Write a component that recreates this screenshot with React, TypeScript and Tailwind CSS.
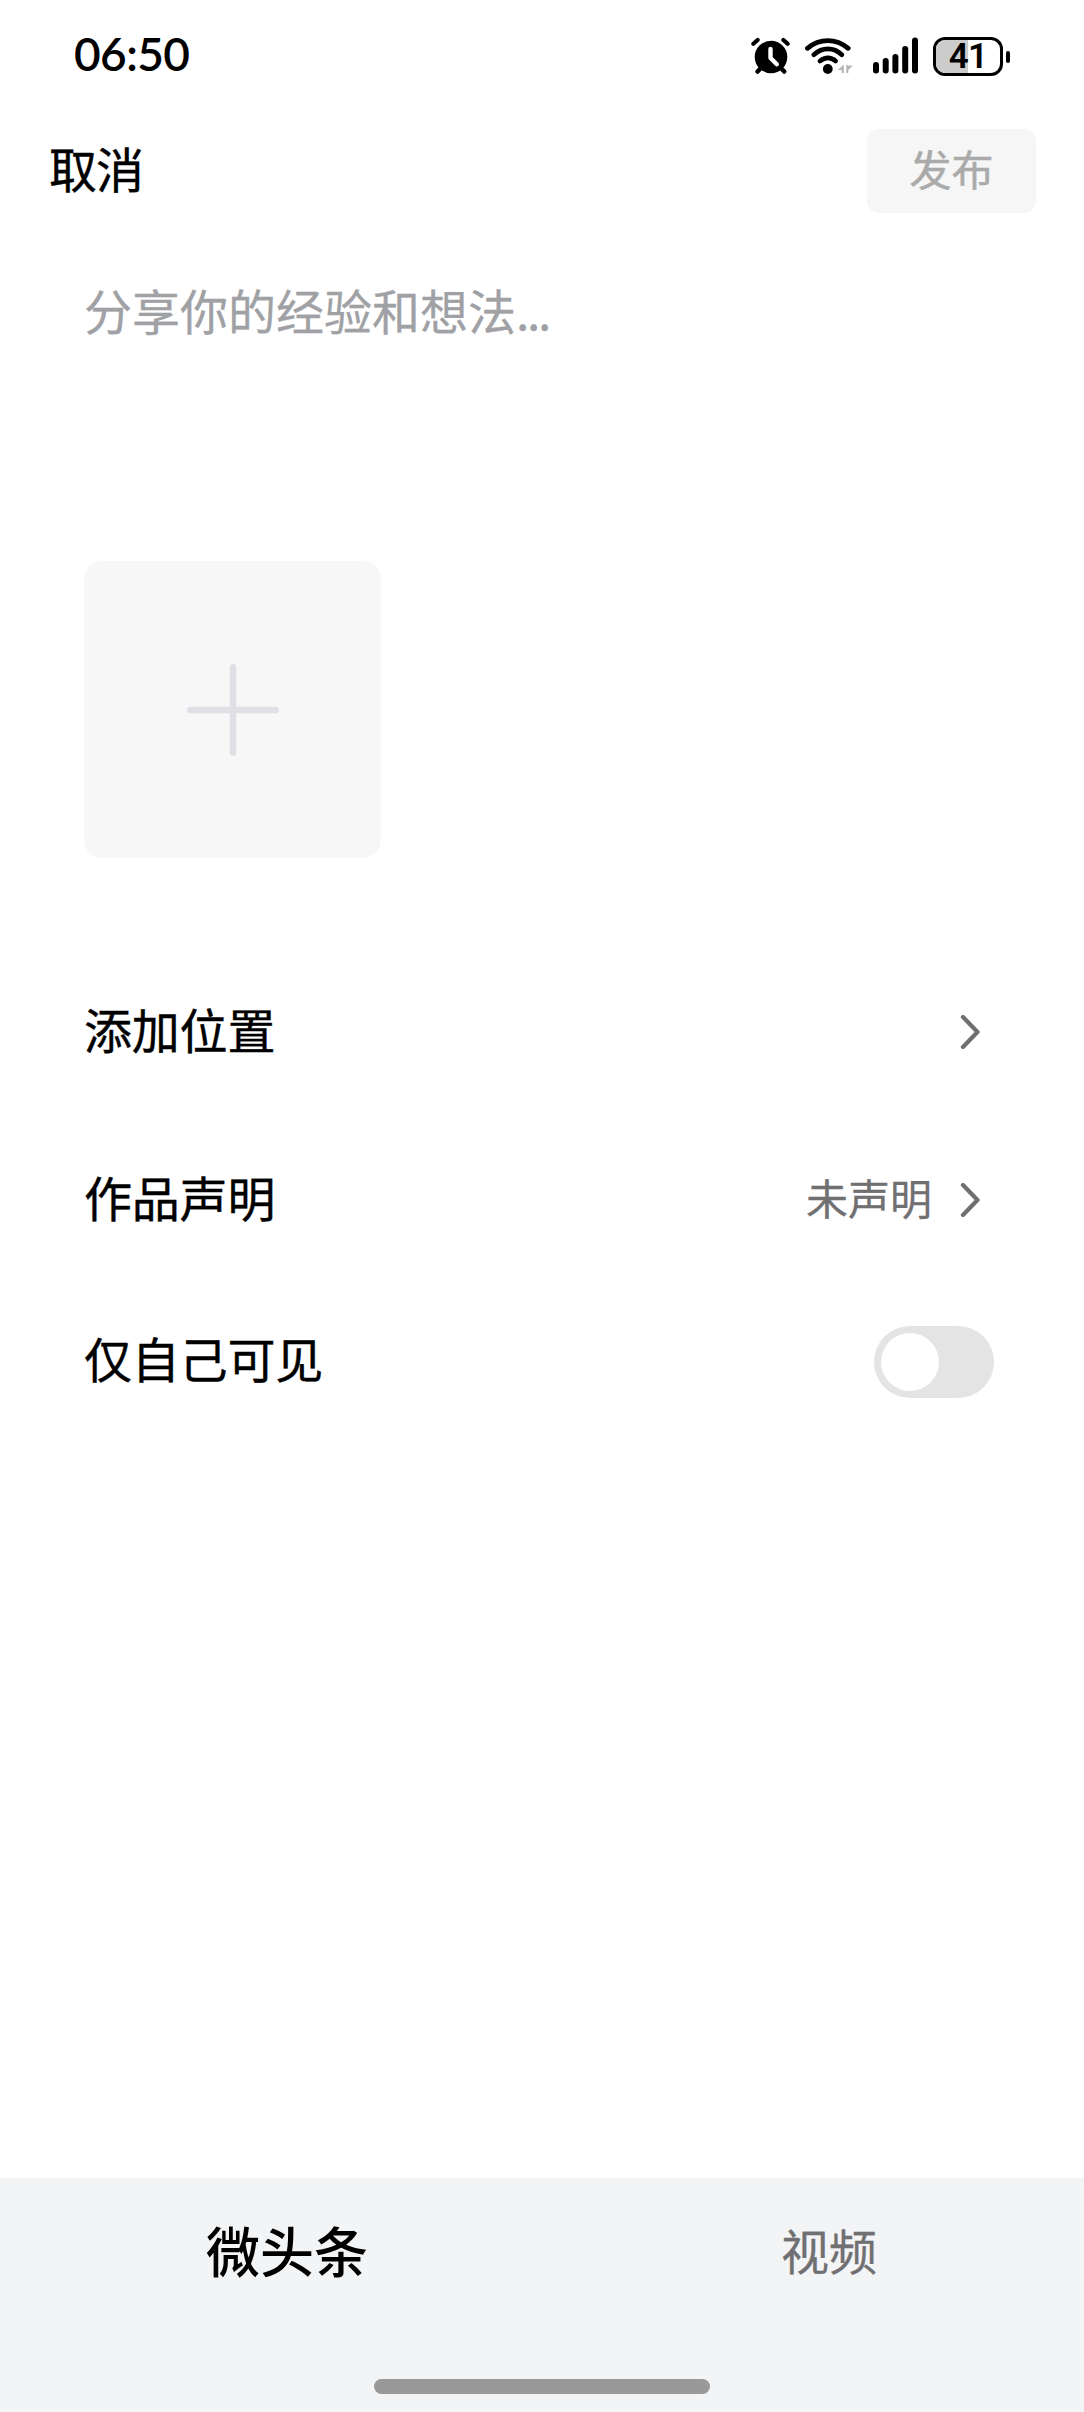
import React, { useState } from 'react';

function AlarmIcon() {
  return (
    <svg width="40" height="38" viewBox="0 0 40 38" fill="none" stroke="#000" strokeLinecap="round">
      <circle cx="20" cy="20" r="16.3" fill="#000" stroke="none" />
      <path d="M2.4 6.8L6.6 3M36.6 6.8L32.4 3" strokeWidth="4.2" />
      <path d="M6.6 34.6l4-4.4M33.2 34.6l-4-4.4" strokeWidth="4.4" />
      <path d="M19.5 12v9l6.3 6.3" stroke="#fff" strokeWidth="4.4" strokeLinejoin="round" />
    </svg>
  );
}

function WifiIcon() {
  return (
    <svg width="50" height="38" viewBox="0 0 50 38" fill="none" stroke="#000" strokeLinecap="round">
      <path d="M2.4 11.3C14.5 1 31 1 43.2 11.3" strokeWidth="4.8" />
      <path d="M8.8 17.7C17.5 10 28.5 10 36.8 17.7" strokeWidth="4.8" />
      <path d="M15 24C20 20 25.8 20 30.6 24" strokeWidth="4.8" />
      <circle cx="22.8" cy="32" r="4.9" fill="#000" stroke="none" />
      <path d="M38.8 27.5v8.5h-2v-3h-4zM41.3 27.5v8.5h2v-3l4.5-4.500h-4.500z" fill="#b5b5b5" stroke="none" />
    </svg>
  );
}

function SignalIcon() {
  const bars = [
    { x: 0, y: 25 },
    { x: 9.7, y: 21 },
    { x: 19.4, y: 17 },
    { x: 29.2, y: 9 },
    { x: 39, y: 0.5 },
  ];
  return (
    <svg width="46" height="38" viewBox="0 0 46 38">
      {bars.map((bar) => (
        <rect key={bar.x} x={bar.x} y={bar.y} width="6" height={36.5 - bar.y} rx="3" />
      ))}
    </svg>
  );
}

function Battery({ level }: { level: number }) {
  return (
    <div className="flex items-center gap-[3px]">
      <div className="relative flex h-[39px] w-[70px] items-center justify-center rounded-[12px] border-[3px] border-black">
        <div className="absolute inset-y-0 left-0 rounded-l-[9px] bg-[#cccccc]" style={{ width: `${level + 9}%` }} />
        <span className="relative font-['Roboto',sans-serif] text-[35px] font-semibold leading-[33px] tracking-[-0.8px]">{level}</span>
      </div>
      <div className="h-[12px] w-[4px] rounded-full bg-black" />
    </div>
  );
}

function StatusBar() {
  return (
    <div className="flex h-[110px] pl-[74px]">
      <span className="mt-[26px] w-[677px] font-['Lato',sans-serif] text-[46px] font-semibold leading-[56px] tracking-[-0.6px]">06:50</span>
      <div className="mt-[37px] flex h-[39px] items-start">
        <AlarmIcon />
        <div className="ml-[14px]"><WifiIcon /></div>
        <div className="ml-[18px]"><SignalIcon /></div>
        <div className="ml-[14px]"><Battery level={41} /></div>
      </div>
    </div>
  );
}

function Chevron() {
  return (
    <svg width="20" height="36" viewBox="0 0 20 36" fill="none" stroke="#707072" strokeWidth="4.2" strokeLinecap="round" strokeLinejoin="round">
      <path d="M3 3l14.5 15L3 33" />
    </svg>
  );
}

function OptionRow({ label, value }: { label: string; value?: string }) {
  return (
    <button className="flex h-[168px] w-full items-center justify-between pr-[20px]">
      <span className="pb-[9px] text-[48px] leading-[70px] tracking-[-0.2px] [-webkit-text-stroke:0.4px]">{label}</span>
      <span className="flex items-center gap-[28px]">
        {value && <span className="pb-[7px] text-[42px] leading-[60px] text-[#707072] [-webkit-text-stroke:0.3px]">{value}</span>}
        <Chevron />
      </span>
    </button>
  );
}

export default function App() {
  const [onlyMe, setOnlyMe] = useState(false);

  return (
    <div className="flex h-[2412px] w-[1084px] flex-col bg-white font-['Noto_Sans_CJK_SC',sans-serif] text-black">
      <StatusBar />

      <header className="flex h-[122px] items-center justify-between pl-[49px] pr-[48px]">
        <button className="pb-[9px] text-[48px] leading-[70px] tracking-[-1px] [-webkit-text-stroke:0.4px]">取消</button>
        <button className="h-[84px] w-[169px] rounded-[12px] bg-[#f6f6f6] pb-[6px] text-[42px] leading-[60px] text-[#aaaaaa] [-webkit-text-stroke:0.5px]">
          发布
        </button>
      </header>

      <main className="flex flex-1 flex-col px-[84px] pt-[42px]">
        <p className="h-[287px] text-[48px] leading-[70px] text-[#a0a1a5] [-webkit-text-stroke:0.3px]">
          分享你的经验和想法<span className="tracking-[-2.4px]">...</span>
        </p>

        <button className="flex h-[297px] w-[297px] items-center justify-center rounded-[18px] bg-[#f7f7f7]">
          <svg width="92" height="92" viewBox="0 0 92 92" stroke="#dfe0e6" strokeWidth="6.4" strokeLinecap="round">
            <path d="M46 3.2v85.6M3.2 46h85.6" />
          </svg>
        </button>

        <div className="mt-[90px]">
          <OptionRow label="添加位置" />
          <OptionRow label="作品声明" value="未声明" />
          <div className="flex h-[156px] items-center justify-between pr-[6px]">
            <span className="pb-[10px] text-[48px] leading-[70px] tracking-[-0.2px] [-webkit-text-stroke:0.4px]">仅自己可见</span>
            <button
              onClick={() => setOnlyMe(!onlyMe)}
              className={`flex h-[72px] w-[120px] items-center rounded-full px-[7px] ${
                onlyMe ? 'justify-end bg-[#f04142]' : 'bg-[#e4e4e4]'
              }`}
            >
              <span className="h-[58px] w-[58px] rounded-full bg-white" />
            </button>
          </div>
        </div>
      </main>

      <nav className="flex h-[234px] flex-col items-center bg-[#f3f4f6]">
        <div className="grid h-[201px] w-full grid-cols-2 pt-[31px]">
          <button className="h-[80px] pl-[32px] text-[54px] font-medium leading-[82px]">微头条</button>
          <button className="h-[80px] pl-[32px] text-[48px] leading-[80px] text-[#707072] [-webkit-text-stroke:0.3px]">视频</button>
        </div>
        <div className="h-[15px] w-[336px] rounded-full bg-[#999999]" />
      </nav>
    </div>
  );
}
